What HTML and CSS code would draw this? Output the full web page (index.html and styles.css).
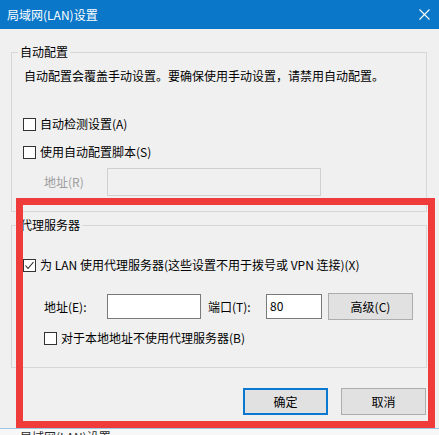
FILE: index.html
```html
<!DOCTYPE html>
<html lang="zh-CN">
<head>
<meta charset="utf-8">
<title>局域网(LAN)设置</title>
<link rel="stylesheet" href="styles.css">
</head>
<body>
<div class="dialog">
  <div class="titlebar">
    <span class="title">局域网(LAN)设置</span>
    <svg class="close" width="11" height="11" viewBox="0 0 11 11"><path d="M0.5 0.5L10.5 10.5M10.5 0.5L0.5 10.5" stroke="#ffffff" stroke-width="1.1" fill="none"/></svg>
  </div>
  <div class="content">
    <fieldset class="group group-auto">
      <legend>自动配置</legend>
      <div class="inner inner-auto">
        <p class="desc">自动配置会覆盖手动设置。要确保使用手动设置，请禁用自动配置。</p>
        <div class="check check-a"><span class="box"></span><span>自动检测设置(A)</span></div>
        <div class="check check-s"><span class="box"></span><span>使用自动配置脚本(S)</span></div>
        <div class="addr-row addr-r">
          <span class="field-label disabled">地址(R)</span>
          <span class="input input-disabled input-script"></span>
        </div>
      </div>
    </fieldset>
    <fieldset class="group group-proxy">
      <legend>代理服务器</legend>
      <div class="inner inner-proxy">
        <div class="check check-x"><span class="box checked"><svg width="13" height="13" viewBox="0 0 13 13"><path d="M2.5 6.5L5 9.5L10.5 3" stroke="#222222" stroke-width="1.1" fill="none"/></svg></span><span>为 LAN 使用代理服务器(这些设置不用于拨号或 VPN 连接)(X)</span></div>
        <div class="addr-row addr-e">
          <span class="field-label">地址(E):</span>
          <span class="input input-addr"></span>
          <span class="field-label port-label">端口(T):</span>
          <span class="input input-port">80</span>
          <span class="btn btn-adv">高级(C)</span>
        </div>
        <div class="check check-b"><span class="box"></span><span>对于本地地址不使用代理服务器(B)</span></div>
      </div>
    </fieldset>
    <div class="actions">
      <span class="btn btn-default">确定</span>
      <span class="btn">取消</span>
    </div>
  </div>
</div>
<div class="under-window">
  <span class="under-title">局域网(LAN)设置</span>
</div>
<div class="highlight"></div>
</body>
</html>
```

FILE: styles.css
```css
html, body {
  margin: 0;
  padding: 0;
}
body {
  width: 439px;
  height: 435px;
  overflow: hidden;
  position: relative;
  background: #f0f0f0;
  font-family: "Noto Sans CJK SC", "Microsoft YaHei", sans-serif;
  font-size: 12px;
  line-height: 16px;
  color: #000000;
}
.dialog {
  height: 428px;
  overflow: hidden;
  background: #f0f0f0;
}
.titlebar {
  height: 29px;
  background: #0a77c9;
  color: #ffffff;
  display: flex;
  align-items: center;
  justify-content: space-between;
  padding: 0 9px 0 7px;
  box-sizing: border-box;
}
.title {
  line-height: 16px;
}
.close {
  display: block;
  margin-top: -1px;
}
.content {
  padding: 0 12px 0 11px;
  display: flex;
  flex-direction: column;
}
.group {
  margin: 0;
  padding: 0;
  border: 1px solid #d7d7d7;
  min-width: 0;
}
.group legend {
  padding: 0 2px;
  margin-left: 6px;
  line-height: 16px;
}
.group-auto {
  margin-top: 15px;
}
.group-proxy {
  margin-top: 5px;
}
.inner {
  display: flex;
  flex-direction: column;
  padding-left: 11px;
}
.inner-auto {
  padding-bottom: 15px;
}
.inner-proxy {
  padding-bottom: 21px;
}
.desc {
  margin: 8px 0 0 1px;
  height: 16px;
}
.check {
  display: flex;
  align-items: center;
  height: 16px;
  gap: 4px;
}
.box {
  width: 13px;
  height: 13px;
  box-sizing: border-box;
  border: 1px solid #333333;
  background: #ffffff;
  position: relative;
  flex: none;
}
.box svg {
  display: block;
  margin: -1px;
}
.check-a { margin-top: 32px; }
.check-s { margin-top: 12px; }
.check-x { margin-top: 24px; }
.check-b { margin-top: 10px; margin-left: 21px; }
.addr-row {
  display: flex;
  align-items: center;
}
.addr-r {
  margin-top: 8px;
  height: 28px;
}
.addr-e {
  margin-top: 20px;
  height: 27px;
}
.field-label {
  margin-left: 21px;
  width: 63px;
  flex: none;
}
.field-label.disabled {
  color: #9d9d9d;
}
.port-label {
  margin-left: 7px;
  width: 58px;
}
.input {
  display: block;
  box-sizing: border-box;
  background: #ffffff;
  border: 1px solid #7a7a7a;
  flex: none;
}
.input-disabled {
  background: #f0f0f0;
  border-color: #d0d0d0;
}
.input-script {
  width: 214px;
  height: 28px;
}
.input-addr {
  width: 94px;
  height: 25px;
}
.input-port {
  width: 56px;
  height: 25px;
  padding: 3px 0 0 3px;
  line-height: 16px;
}
.btn {
  display: flex;
  align-items: center;
  justify-content: center;
  box-sizing: border-box;
  width: 85px;
  height: 27px;
  background: #e1e1e1;
  border: 1px solid #adadad;
  flex: none;
}
.btn-adv {
  margin-left: 6px;
}
.btn-default {
  border: 2px solid #0a78d0;
}
.actions {
  display: flex;
  justify-content: flex-end;
  gap: 13px;
  margin-top: 20px;
  margin-right: 1px;
}
.under-window {
  height: 7px;
  overflow: hidden;
  background: #f7f7f7;
  border-top: 1px solid #9cc6e6;
  box-sizing: border-box;
  padding-left: 20px;
  color: #2a2a2a;
}
.under-title {
  display: block;
  line-height: 16px;
  margin-top: 0px;
}
.highlight {
  position: absolute;
  left: 16px;
  top: 198px;
  width: 419px;
  height: 230px;
  box-sizing: border-box;
  border: 7px solid #f03b3b;
  pointer-events: none;
}
```
